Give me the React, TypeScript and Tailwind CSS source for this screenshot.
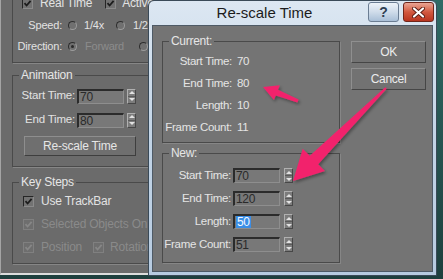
import React from 'react';

// small 3ds Max style widgets

function Spinner() {
  return (
    <div className="flex flex-col w-[9px] h-[15px] bg-[#7c7c7c] border border-t-[#b0b0b0] border-l-[#b0b0b0] border-r-[#474747] border-b-[#474747]">
      <div className="flex-1 flex items-center justify-center border-b border-[#5a5a5a]">
        <div className="w-0 h-0 border-l-[3px] border-r-[3px] border-b-[3px] border-l-transparent border-r-transparent border-b-[#e2e2e2]" />
      </div>
      <div className="flex-1 flex items-center justify-center">
        <div className="w-0 h-0 border-l-[3px] border-r-[3px] border-t-[3px] border-l-transparent border-r-transparent border-t-[#e2e2e2]" />
      </div>
    </div>
  );
}

function Field({ value, selected }: { value: string; selected?: boolean }) {
  return (
    <div className="w-[47px] h-[15px] bg-[#787878] border-t-2 border-l-2 border-t-[#2b2b2b] border-l-[#2b2b2b] border-b border-r border-b-[#8e8e8e] border-r-[#8e8e8e] flex items-center pl-[1px] text-[12px] leading-none text-[#2a2a2a]">
      {selected ? <span className="bg-[#3a8ee6] text-[#f4f8ff] px-[1px] leading-[12px]">{value}</span> : value}
    </div>
  );
}

function Check({ disabled }: { disabled?: boolean }) {
  return (
    <div
      className={
        disabled
          ? 'w-[11px] h-[11px] shrink-0 bg-[#6e6e6e] border border-[#808080]'
          : 'w-[11px] h-[11px] shrink-0 bg-[#727272] border border-t-[#262626] border-l-[#262626] border-b-[#8a8a8a] border-r-[#8a8a8a]'
      }
    >
      <svg viewBox="0 0 9 9" className="w-full h-full">
        <path d="M1.5 4.2 L3.6 6.5 L7.6 1.8" fill="none" stroke={disabled ? '#878787' : '#1c1c1c'} strokeWidth="1.8" />
      </svg>
    </div>
  );
}

function Radio({ on }: { on?: boolean }) {
  return (
    <div className="w-[9px] h-[9px] shrink-0 rounded-full bg-[#707070] border border-t-[#2e2e2e] border-l-[#2e2e2e] border-b-[#9c9c9c] border-r-[#9c9c9c] flex items-center justify-center">
      {on && <div className="w-[3px] h-[3px] rounded-full bg-[#2a2a2a]" />}
    </div>
  );
}

function Group({ title, className, legendBg, children }: { title: string; className: string; legendBg: string; children: React.ReactNode }) {
  return (
    <fieldset className={`border border-[#4a4a4a] shadow-[1px_1px_0_#868686] ${className}`}>
      <legend className={`ml-[6px] px-[2px] text-[12px] leading-[13px] text-[#e6e6e6] ${legendBg}`}>{title}</legend>
      {children}
    </fieldset>
  );
}

// right-aligned label that never wraps
function Label({ w, children }: { w: string; children: React.ReactNode }) {
  return <span className={`${w} shrink-0 flex justify-end whitespace-nowrap`}>{children}</span>;
}

function LeftPanel() {
  return (
    <div className="w-[160px] h-[275px] bg-[#6b6b6b] border-l border-[#a4a4a4] border-b-2 border-b-[#dcdcdc] text-[11px] tracking-[-0.2px] text-[#e2e2e2]">
      {/* time configuration group, its top is scrolled off */}
      <div className="ml-[11px] h-[63px] border-l border-b border-[#4a4a4a] shadow-[1px_1px_0_#868686] flex flex-col">
        <div className="-mt-[4px] h-[14px] flex items-center">
          <div className="ml-[9px]"><Check /></div>
          <span className="ml-[7px] text-[12px]">Real Time</span>
          <div className="ml-[13px]"><Check /></div>
          <span className="ml-[6px] text-[12px]">Active</span>
        </div>
        <div className="mt-[8px] h-[14px] flex items-center">
          <Label w="w-[49px]">Speed:</Label>
          <div className="ml-[6px]"><Radio /></div>
          <span className="ml-[7px]">1/4x</span>
          <div className="ml-[12px]"><Radio /></div>
          <span className="ml-[8px]">1/2x</span>
        </div>
        <div className="mt-[7px] h-[14px] flex items-center">
          <Label w="w-[49px]">Direction:</Label>
          <div className="ml-[6px]"><Radio on /></div>
          <span className="ml-[8px] text-[#8c8c8c]">Forward</span>
          <div className="ml-[15px]"><Radio /></div>
        </div>
      </div>

      <Group title="Animation" legendBg="bg-[#6b6b6b]" className="ml-[11px] mt-[6px] h-[98px] pb-[9px]">
        <div className="mt-[6px] h-[16px] flex items-center text-[11.5px]">
          <Label w="w-[62px]">Start Time:</Label>
          <div className="ml-[2px]"><Field value="70" /></div>
          <div className="ml-[3px]"><Spinner /></div>
        </div>
        <div className="mt-[8px] h-[16px] flex items-center text-[11.5px]">
          <Label w="w-[62px]">End Time:</Label>
          <div className="ml-[2px]"><Field value="80" /></div>
          <div className="ml-[3px]"><Spinner /></div>
        </div>
        <button className="ml-[11px] mt-[8px] w-[112px] h-[20px] bg-[#6f6f6f] border border-t-[#8e8e8e] border-l-[#8e8e8e] border-b-[#3e3e3e] border-r-[#3e3e3e] text-[12px] text-[#e6e6e6] flex items-center justify-center">
          Re-scale Time
        </button>
      </Group>

      <Group title="Key Steps" legendBg="bg-[#6b6b6b]" className="ml-[11px] mt-[9px] h-[88px]">
        <div className="mt-[5px] h-[14px] flex items-center">
          <div className="ml-[10px]"><Check /></div>
          <span className="ml-[7px] text-[12px]">Use TrackBar</span>
        </div>
        <div className="mt-[9px] h-[14px] flex items-center text-[#8a8a8a]">
          <div className="ml-[10px]"><Check disabled /></div>
          <span className="ml-[7px] text-[12px] whitespace-nowrap">Selected Objects Only</span>
        </div>
        <div className="mt-[9px] h-[14px] flex items-center text-[#8a8a8a]">
          <div className="ml-[10px]"><Check disabled /></div>
          <span className="ml-[7px] text-[12px]">Position</span>
          <div className="ml-[11px]"><Check disabled /></div>
          <span className="ml-[6px] text-[12px]">Rotation</span>
        </div>
      </Group>
    </div>
  );
}

const current = [
  ['Start Time:', '70'],
  ['End Time:', '80'],
  ['Length:', '10'],
  ['Frame Count:', '11'],
];

const next = [
  ['Start Time:', '70'],
  ['End Time:', '120'],
  ['Length:', '50'],
  ['Frame Count:', '51'],
];

function RescaleDialog() {
  return (
    <div className="absolute left-[148px] top-0 w-[289px] h-[276px] z-10 rounded-t-[6px] border border-[#3a4a58] bg-gradient-to-b from-[#dce7f2] via-[#c2d4e6] to-[#b7cbe0] flex flex-col">
      {/* title bar */}
      <div className="h-[24px] flex items-start pl-[12px] pr-[2px] pt-[1px]">
        <div className="flex-1 text-center text-[15px] leading-[22px] text-[#1c1c1c]">Re-scale Time</div>
        <div className="w-[31px] h-[20px] rounded-[3px] border border-[#6b7d93] bg-gradient-to-b from-[#eef3f9] via-[#cfdcea] to-[#a9bfd7] flex items-center justify-center text-[14px] font-bold leading-none text-[#2f3f52]">
          ?
        </div>
        <div className="ml-[4px] w-[31px] h-[20px] rounded-[3px] border border-[#70261b] bg-gradient-to-b from-[#eaa594] via-[#d2583f] to-[#b8341f] flex items-center justify-center">
          <svg width="13" height="11" viewBox="0 0 13 11">
            <path d="M2 1.5 L11 9.5 M11 1.5 L2 9.5" stroke="#5a1d14" strokeWidth="4" strokeLinecap="round" />
            <path d="M2 1.5 L11 9.5 M11 1.5 L2 9.5" stroke="#ffffff" strokeWidth="2.2" strokeLinecap="round" />
          </svg>
        </div>
      </div>

      {/* body */}
      <div className="mx-[3px] h-[247px] bg-[#747474] border border-[#4e5a66] flex pl-[9px] pt-[9px] text-[11.5px] tracking-[-0.3px] text-[#e4e4e4]">
        <div className="w-[178px] flex flex-col">
          <Group title="Current:" legendBg="bg-[#747474]" className="h-[108px]">
            <div className="mt-[7px] flex flex-col gap-[8px]">
              {current.map(([label, value]) => (
                <div key={label} className="h-[14px] flex items-center">
                  <Label w="w-[69px]">{label}</Label>
                  <span className="ml-[5px]">{value}</span>
                </div>
              ))}
            </div>
          </Group>
          <Group title="New:" legendBg="bg-[#747474]" className="mt-[4px] h-[116px]">
            <div className="mt-[8px] flex flex-col gap-[8px]">
              {next.map(([label, value]) => (
                <div key={label} className="h-[15px] flex items-center">
                  <Label w="w-[68px]">{label}</Label>
                  <div className="ml-[2px]"><Field value={value} selected={label === 'Length:'} /></div>
                  <div className="ml-[4px]"><Spinner /></div>
                </div>
              ))}
            </div>
          </Group>
        </div>

        <div className="ml-[11px] pt-[6px] flex flex-col gap-[5px]">
          <button className="w-[75px] h-[22px] bg-[#727272] border border-t-[#8f8f8f] border-l-[#8f8f8f] border-b-[#464646] border-r-[#464646] text-[12px] text-[#ececec] flex items-center justify-center">
            OK
          </button>
          <button className="w-[75px] h-[22px] bg-[#727272] border border-t-[#8f8f8f] border-l-[#8f8f8f] border-b-[#464646] border-r-[#464646] text-[12px] text-[#ececec] flex items-center justify-center">
            Cancel
          </button>
        </div>
      </div>
    </div>
  );
}

function Arrows() {
  return (
    <svg className="absolute inset-0 z-20 pointer-events-none" width="443" height="279" viewBox="0 0 443 279">
      <defs>
        <filter id="sh" x="-20%" y="-20%" width="140%" height="140%">
          <feDropShadow dx="1.5" dy="2" stdDeviation="1.5" floodColor="#000" floodOpacity="0.35" />
        </filter>
      </defs>
      {/* small arrow to End Time */}
      <polygon
        points="263,87 279.9,85.2 278,89.8 298.6,99.6 297.4,102.4 275.8,95.4 273.9,100"
        fill="#f2246c"
        filter="url(#sh)"
      />
      {/* big arrow from Cancel to New fields */}
      <polygon
        points="293,181 302.7,148.7 309.8,155.8 385.3,87.3 386.7,88.7 318.2,164.2 325,171"
        fill="#f2246c"
        filter="url(#sh)"
      />
    </svg>
  );
}

export default function App() {
  return (
    <div className="relative w-[443px] h-[279px] overflow-hidden bg-gradient-to-b from-[#2f6b66] to-[#1e3f3d] font-['Liberation_Sans',Arial,sans-serif]">
      <LeftPanel />
      <RescaleDialog />
      <Arrows />
    </div>
  );
}
